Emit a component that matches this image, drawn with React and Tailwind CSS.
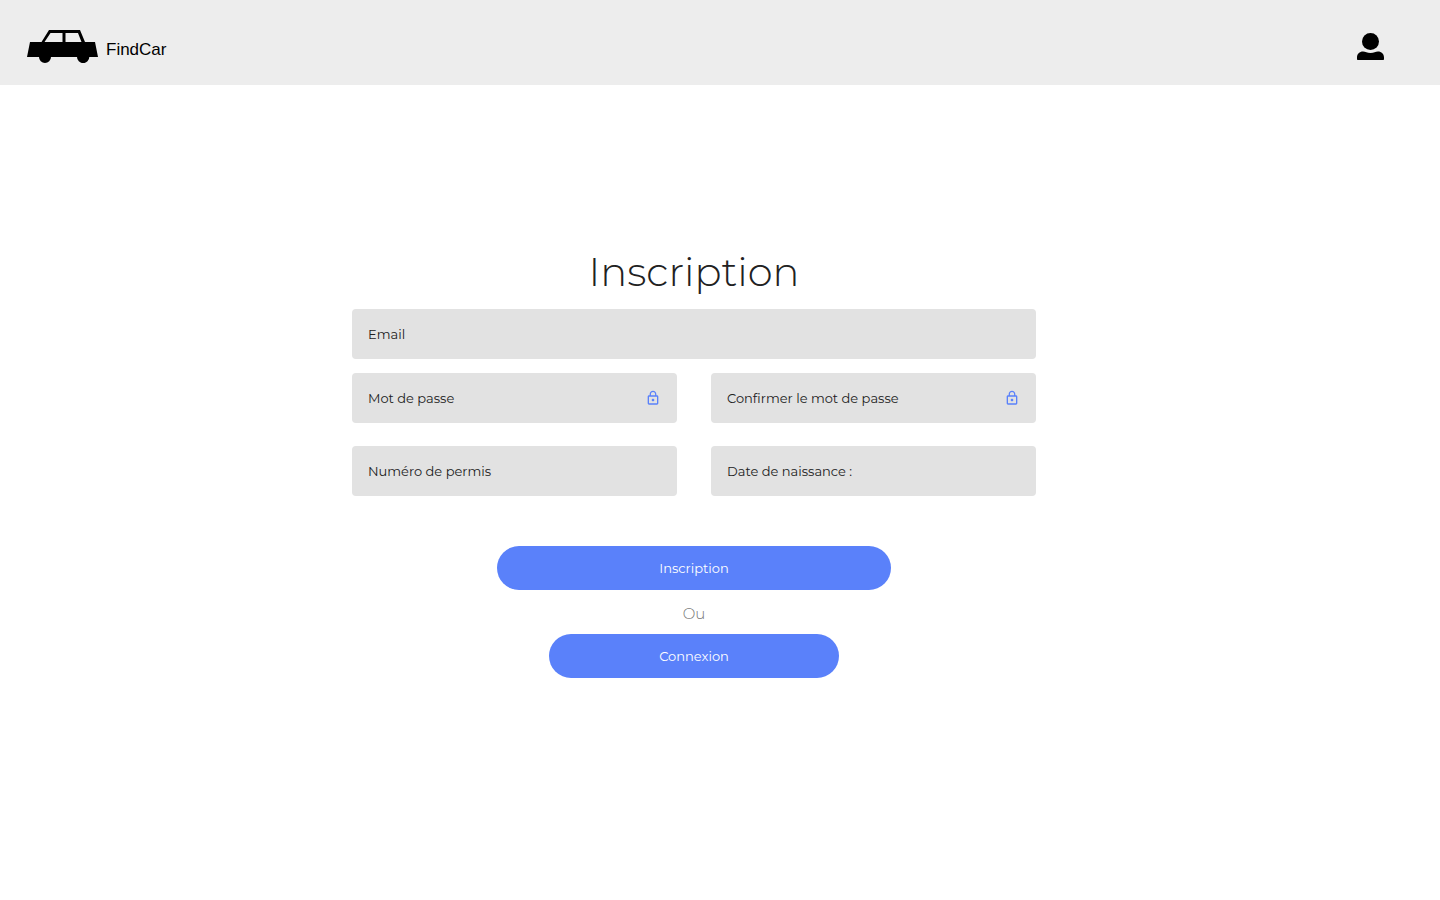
import { MdLockOutline } from "react-icons/md";

function CarLogo() {
  return (
    <svg width="71" height="33" viewBox="0 0 71 33" aria-hidden="true">
      <path
        fillRule="evenodd"
        d="M3 12H14.5L22 0H53L58 12H68L71 27H62.3A6 6 0 1 1 50 27H24A6 6 0 1 1 12 27H0ZM17.500 12H35.500V3H23.500ZM38.500 12H54.500L51 3H38.500Z"
      />
    </svg>
  );
}

function UserIcon() {
  return (
    <svg width="27" height="27" viewBox="0 0 27 27" aria-hidden="true">
      <circle cx="13.5" cy="8.5" r="8.5" />
      <path d="M0.8 27Q0 27 0 26.200V24.500C0 21 2.500 18.500 6 18.500C8.500 18.500 10 20 13.500 20C17 20 18.500 18.500 21 18.500C24.500 18.500 27 21 27 24.500V26.200Q27 27 26.200 27Z" />
    </svg>
  );
}

function Field({ id, label, type = "text", locked = false, className = "" }) {
  return (
    <div
      className={`flex h-[50px] items-center gap-2 rounded bg-[#e2e2e2] px-4 text-[13px] leading-5 text-[#212121] ${className}`}
    >
      <label htmlFor={id} className="shrink-0 cursor-text">
        {label}
      </label>
      <input
        id={id}
        name={id}
        type={type}
        className="h-full min-w-0 flex-1 bg-transparent outline-none"
      />
      {locked && <MdLockOutline size={16} className="shrink-0 text-[#5a81fa]" aria-hidden="true" />}
    </div>
  );
}

export default function App() {
  return (
    <div className="min-h-screen bg-white font-['Montserrat','Inter',sans-serif]">
      <header className="flex h-[85px] items-center justify-between bg-[#ededed] pl-[27px] pr-14 pt-2">
        <a
          href="#accueil"
          className="flex items-end gap-2 font-['Liberation_Sans',Arial,sans-serif] text-[17px] leading-[26px] text-black"
        >
          <CarLogo />
          FindCar
        </a>
        <button type="button" aria-label="Compte">
          <UserIcon />
        </button>
      </header>

      <main className="flex justify-center pl-4 pr-[68px] pt-40">
        <form
          className="flex w-full max-w-[684px] flex-col items-center"
          onSubmit={(event) => event.preventDefault()}
        >
          <h1 className="mb-2.5 text-[40px] font-light leading-[54px] text-[#212121]">Inscription</h1>

          <Field id="email" label="Email" className="w-full" />
          <div className="mt-3.5 grid w-full grid-cols-1 gap-x-[34px] gap-y-[23px] sm:grid-cols-2">
            <Field id="password" label="Mot de passe" type="password" locked />
            <Field id="confirm" label="Confirmer le mot de passe" type="password" locked />
            <Field id="licence" label="Numéro de permis" />
            <Field id="birth" label="Date de naissance :" />
          </div>

          <button
            type="submit"
            className="mt-[50px] h-11 w-full max-w-[394px] rounded-full bg-[#5a81fa] text-[13px] leading-5 text-white"
          >
            Inscription
          </button>
          <p className="pb-2 pt-3 text-[15px] font-light leading-6 text-[#757575]">Ou</p>
          <button
            type="button"
            className="h-11 w-full max-w-[290px] rounded-full bg-[#5a81fa] text-[13px] leading-5 text-white"
          >
            Connexion
          </button>
        </form>
      </main>
    </div>
  );
}
